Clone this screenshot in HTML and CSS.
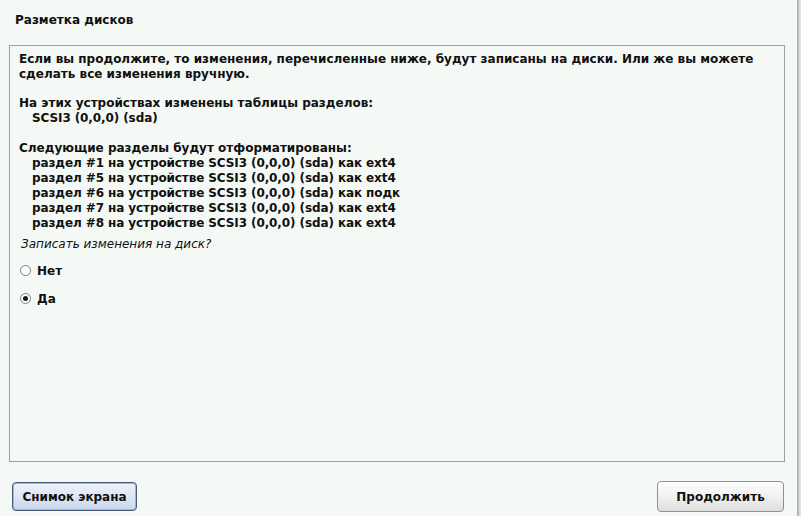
FILE: index.html
```html
<!DOCTYPE html>
<html lang="ru">
<head>
<meta charset="utf-8">
<link rel="stylesheet" href="styles.css">
</head>
<body>
<div class="window">
  <div class="main">
    <h1 class="title">Разметка дисков</h1>
    <div class="panel">
      <p class="line">Если вы продолжите, то изменения, перечисленные ниже, будут записаны на диски. Или же вы можете<br>сделать все изменения вручную.</p>
      <p class="line gap">На этих устройствах изменены таблицы разделов:</p>
      <p class="line indent">SCSI3 (0,0,0) (sda)</p>
      <p class="line gap">Следующие разделы будут отформатированы:</p>
      <p class="line indent">раздел #1 на устройстве SCSI3 (0,0,0) (sda) как ext4</p>
      <p class="line indent">раздел #5 на устройстве SCSI3 (0,0,0) (sda) как ext4</p>
      <p class="line indent">раздел #6 на устройстве SCSI3 (0,0,0) (sda) как подк</p>
      <p class="line indent">раздел #7 на устройстве SCSI3 (0,0,0) (sda) как ext4</p>
      <p class="line indent">раздел #8 на устройстве SCSI3 (0,0,0) (sda) как ext4</p>
      <p class="question">Записать изменения на диск?</p>
      <div class="options">
        <label class="option"><span class="radio"></span><span class="opt-text">Нет</span></label>
        <label class="option"><span class="radio checked"></span><span class="opt-text">Да</span></label>
      </div>
    </div>
    <div class="actions">
      <button class="btn btn-focus">Снимок экрана</button>
      <button class="btn">Продолжить</button>
    </div>
  </div>
  <div class="edge"></div>
</div>
</body>
</html>
```
FILE: styles.css
```css
html, body {
  margin: 0;
  padding: 0;
  width: 801px;
  height: 516px;
  overflow: hidden;
  background: #f5f9f6;
  font-family: "DejaVu Sans", sans-serif;
  color: #101010;
}
.window {
  display: flex;
  width: 801px;
  height: 516px;
}
.main {
  flex: 1;
  display: flex;
  flex-direction: column;
  padding: 0 12px 0 9px;
}
.edge {
  width: 4px;
  background: linear-gradient(to right, #b8bcb9 0, #a6aaa7 1px, #d6dad7 2px, #e4e8e5 4px);
}
.title {
  margin: 0;
  padding: 13px 0 0 6px;
  height: 45px;
  box-sizing: border-box;
  font-size: 12px;
  font-weight: bold;
  line-height: 15px;
}
.panel {
  height: 417px;
  box-sizing: border-box;
  border: 1px solid #9ea29f;
  background: #f5f9f6;
  padding: 6px 9px 6px;
}
.line {
  margin: 0;
  font-size: 12px;
  font-weight: bold;
  line-height: 15px;
}
.gap { margin-top: 14px; }
.indent { padding-left: 13px; letter-spacing: -0.1px; }
.line.gap ~ .line.gap { margin-top: 15px; }
.question {
  margin: 6px 0 0 2px;
  font-size: 12px;
  font-style: italic;
  line-height: 15px;
}
.options {
  display: flex;
  flex-direction: column;
  gap: 13px;
  margin-top: 11px;
  padding-left: 1px;
}
.option {
  display: flex;
  align-items: center;
  gap: 6px;
  height: 15px;
  font-size: 12px;
  font-weight: bold;
}
.radio {
  width: 11px;
  height: 11px;
  box-sizing: border-box;
  border: 1px solid #7b7f7c;
  border-radius: 50%;
  background: #ffffff;
  position: relative;
}
.radio.checked::after {
  content: "";
  position: absolute;
  left: 2px;
  top: 2px;
  width: 5px;
  height: 5px;
  border-radius: 50%;
  background: #1a1a1a;
}
.actions {
  display: flex;
  justify-content: space-between;
  align-items: center;
  margin-top: 19px;
  padding: 0 1px 0 3px;
}
.btn {
  font-family: "DejaVu Sans", sans-serif;
  font-size: 12px;
  font-weight: bold;
  white-space: nowrap;
  color: #111;
  height: 31px;
  border-radius: 4px;
  border: 1px solid #8f9390;
  background: linear-gradient(to bottom, #fdfdfd 0%, #f1f1f1 50%, #dedede 100%);
  padding: 0;
  width: 127px;
  box-sizing: border-box;
}
.btn-focus {
  width: 125px;
  height: 29px;
  border: 1px solid #4a5a78;
  background: linear-gradient(to bottom, #eef3fb 0%, #dce6f4 50%, #c9d8ee 100%);
  box-shadow: inset 0 0 0 1px #9fb4d6;
}
```
